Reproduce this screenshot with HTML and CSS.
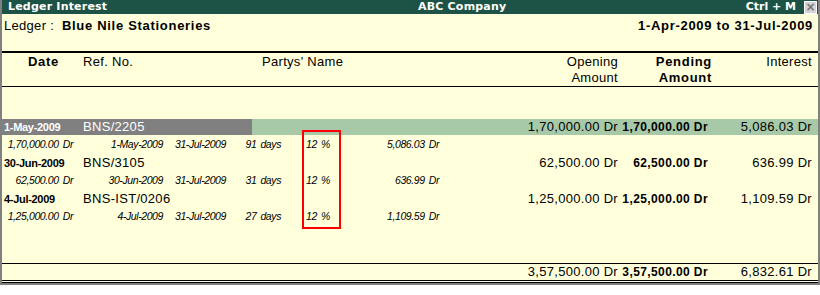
FILE: index.html
```html
<!DOCTYPE html>
<html lang="en">
<head>
  <meta charset="UTF-8" />
  <title>Ledger Interest</title>
  <link rel="stylesheet" href="styles.css">
</head>
<body>

  <div class="window">
    <div class="title-bar">
      <span class="title-left">Ledger Interest</span>
      <span class="title-mid">ABC Company</span>
      <span class="title-key">Ctrl + M</span>
      <span class="close-btn">&times;</span>
    </div>

    <div class="ledger-line">
      <span>Ledger :&nbsp; <b>Blue Nile Stationeries</b></span>
      <b>1-Apr-2009 to 31-Jul-2009</b>
    </div>

    <div class="head">
      <div class="h-date">Date</div>
      <div>Ref. No.</div>
      <div>Partys' Name</div>
      <div class="num">Opening<br>Amount</div>
      <div class="num strong">Pending<br>Amount</div>
      <div class="num">Interest</div>
    </div>

    <div class="bills">
      <!-- bill 1 (selected) -->
      <div class="row selected">
        <div class="c-date">1-May-2009</div>
        <div>BNS/2205</div>
        <div class="num">1,70,000.00 Dr</div>
        <div class="num strong">1,70,000.00 Dr</div>
        <div class="num">5,086.03 Dr</div>
      </div>
      <div class="sub">
        <div class="num">1,70,000.00 Dr</div>
        <div class="num">1-May-2009</div>
        <div class="num">31-Jul-2009</div>
        <div class="num">91 days</div>
        <div></div>
        <div>12 %</div>
        <div class="num">5,086.03 Dr</div>
      </div>

      <!-- bill 2 -->
      <div class="row">
        <div class="c-date">30-Jun-2009</div>
        <div>BNS/3105</div>
        <div class="num">62,500.00 Dr</div>
        <div class="num strong">62,500.00 Dr</div>
        <div class="num">636.99 Dr</div>
      </div>
      <div class="sub">
        <div class="num">62,500.00 Dr</div>
        <div class="num">30-Jun-2009</div>
        <div class="num">31-Jul-2009</div>
        <div class="num">31 days</div>
        <div></div>
        <div>12 %</div>
        <div class="num">636.99 Dr</div>
      </div>

      <!-- bill 3 -->
      <div class="row">
        <div class="c-date">4-Jul-2009</div>
        <div>BNS-IST/0206</div>
        <div class="num">1,25,000.00 Dr</div>
        <div class="num strong">1,25,000.00 Dr</div>
        <div class="num">1,109.59 Dr</div>
      </div>
      <div class="sub">
        <div class="num">1,25,000.00 Dr</div>
        <div class="num">4-Jul-2009</div>
        <div class="num">31-Jul-2009</div>
        <div class="num">27 days</div>
        <div></div>
        <div>12 %</div>
        <div class="num">1,109.59 Dr</div>
      </div>

      <div class="rate-mark"></div>
    </div>

    <div class="total">
      <div></div>
      <div></div>
      <div class="num">3,57,500.00 Dr</div>
      <div class="num strong">3,57,500.00 Dr</div>
      <div class="num">6,832.61 Dr</div>
    </div>
  </div>

</body>
</html>
```

FILE: styles.css
```css
body {
  margin: 0;
  background-color: #ffffff;
  font-family: "Liberation Sans", Arial, sans-serif;
  font-size: 13px;
  letter-spacing: 0.3px;
  color: #000;
}

.window {
  width: 820px;
  box-sizing: border-box;
  background-color: #ffffdc;
  border-left: 2px solid #808080;
  border-right: 2px solid #808080;
  border-bottom: 2px solid #808080;
}

.title-bar {
  display: flex;
  align-items: center;
  height: 14px;
  background-color: #1d5346;
  color: #fff;
  font-family: "DejaVu Sans", Verdana, sans-serif;
  font-weight: bold;
  font-size: 11px;
  letter-spacing: 0.2px;
  line-height: 14px;
}

.title-left {
  width: 410px;
  padding-left: 6px;
  box-sizing: border-box;
}

.title-mid {
  flex: 1;
  padding-left: 6px;
}

.title-key {
  margin-right: 8px;
  letter-spacing: 0;
}

.close-btn {
  width: 11px;
  height: 11px;
  margin-right: 1px;
  background-color: #d4d4d4;
  border: 1px solid #fff;
  color: #707070;
  font-family: "DejaVu Sans", sans-serif;
  font-size: 12px;
  line-height: 11px;
  text-align: center;
  letter-spacing: 0;
}

.ledger-line {
  display: flex;
  justify-content: space-between;
  height: 39px;
  padding: 4px 5px 0 2px;
  box-sizing: border-box;
  line-height: 16px;
  border-bottom: 2px solid #000;
}

.ledger-line b {
  letter-spacing: 0.7px;
}

.head {
  display: grid;
  grid-template-columns: 79px 179px 1fr 90px 94px 100px;
  padding: 1px 6px 0 2px;
  height: 34px;
  box-sizing: border-box;
  line-height: 16px;
  border-bottom: 1px solid #000;
}

.head .h-date {
  padding-left: 24px;
  font-weight: bold;
  letter-spacing: 0.7px;
}

.head .strong {
  font-weight: bold;
  font-size: 13px;
  letter-spacing: 0.7px;
}

.num {
  justify-self: end;
  text-align: right;
  white-space: nowrap;
}

.bills {
  position: relative;
  padding-top: 32px;
  padding-bottom: 36px;
}

.row,
.total {
  display: grid;
  grid-template-columns: 79px 1fr 90px 90px 104px;
  padding: 0 6px 0 2px;
  height: 16px;
  line-height: 16px;
  white-space: nowrap;
}

.row .c-date {
  font-size: 11px;
  font-weight: bold;
  letter-spacing: -0.3px;
}

.strong {
  font-weight: bold;
  font-size: 12px;
  letter-spacing: 0.4px;
}

.row.selected {
  background: linear-gradient(to right, #808080 250px, #a8c9a8 250px);
}

.row.selected .c-date,
.row.selected div:nth-child(2) {
  color: #fff;
}

.sub {
  display: grid;
  grid-template-columns: 69px 90px 63px 55px 25px 39px 94px 1fr;
  padding-left: 2px;
  height: 20px;
  line-height: 18px;
  font-size: 10.5px;
  font-style: italic;
  letter-spacing: -0.4px;
  word-spacing: 1.5px;
  white-space: nowrap;
}

.rate-mark {
  position: absolute;
  left: 300px;
  top: 43px;
  width: 35px;
  height: 95px;
  border: 2px solid #f00;
}

.total {
  border-top: 1px solid #000;
  border-bottom: 3px double #000;
}
```
